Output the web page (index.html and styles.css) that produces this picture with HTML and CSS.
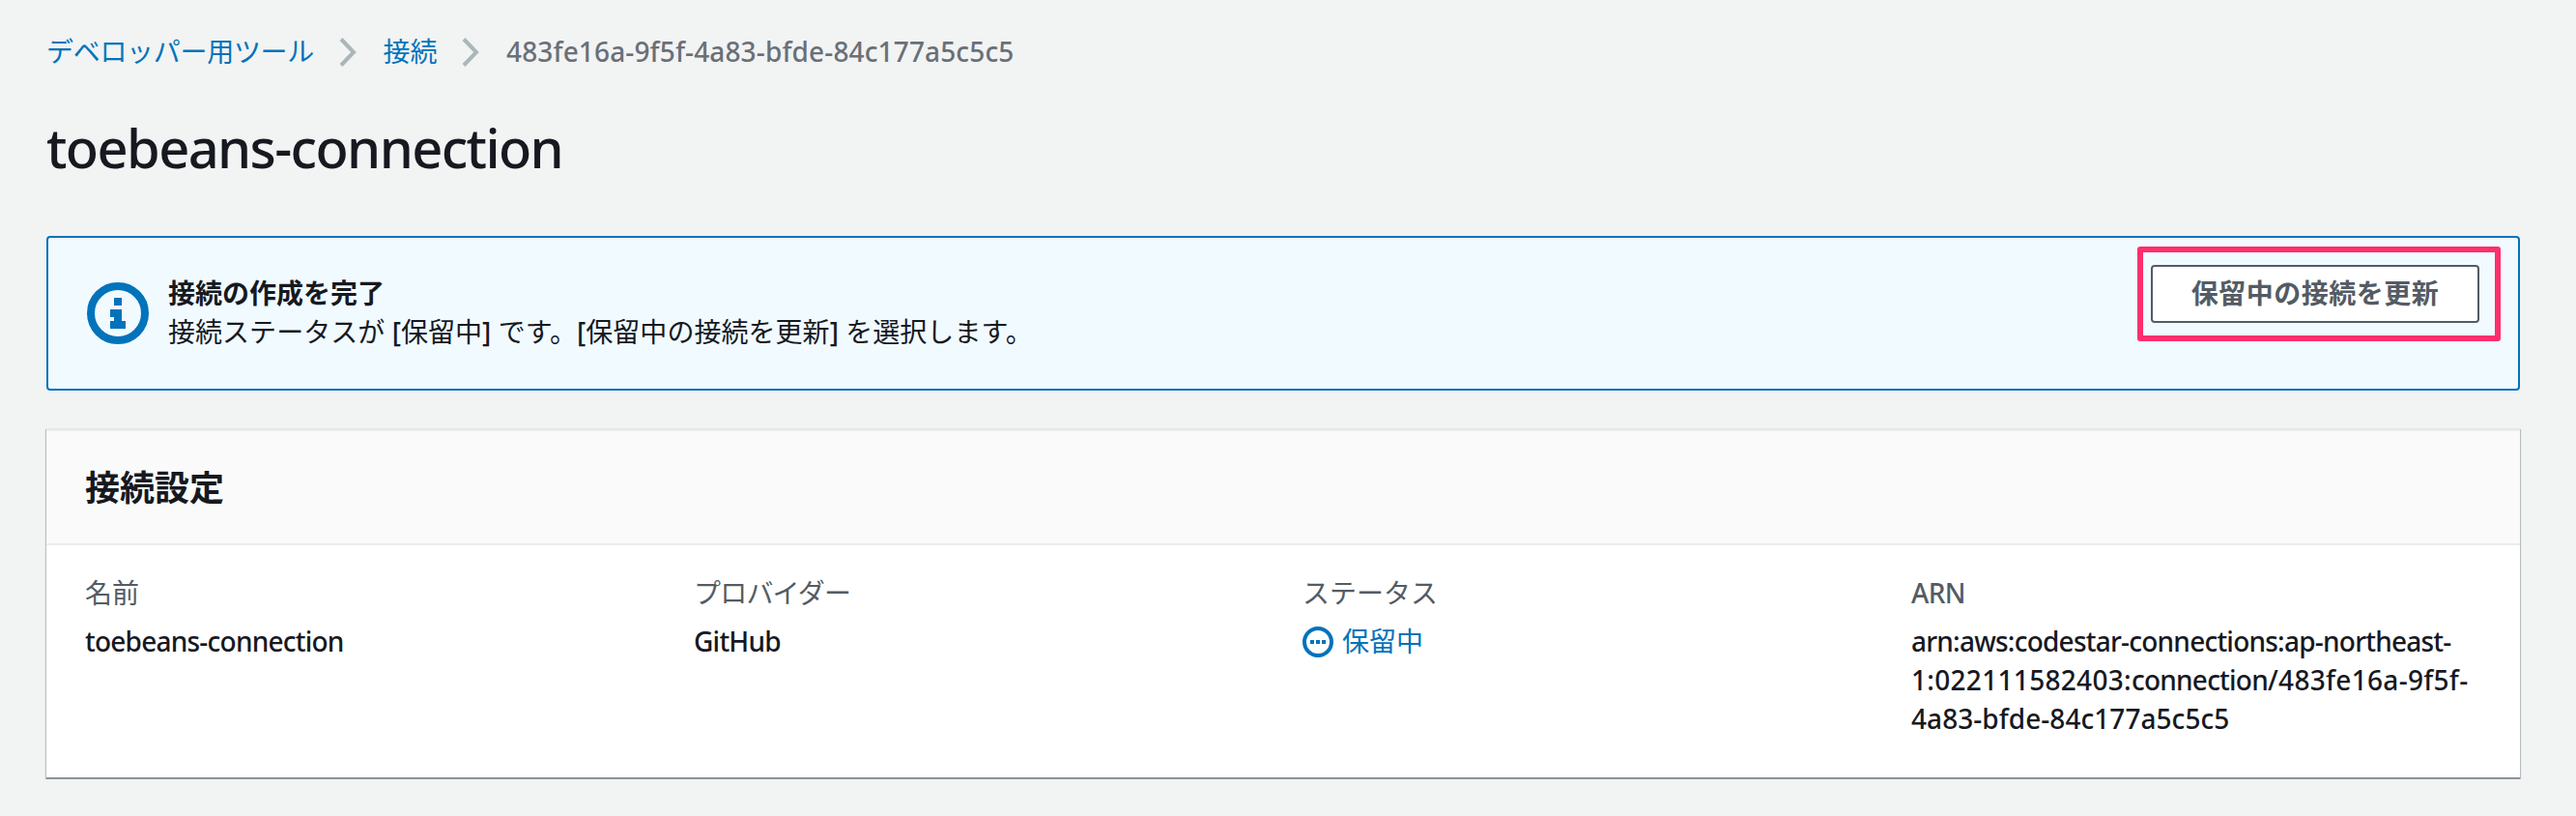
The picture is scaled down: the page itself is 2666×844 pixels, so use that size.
FILE: index.html
```html
<!DOCTYPE html>
<html lang="ja">
<head>
<meta charset="utf-8">
<title>toebeans-connection</title>
<link rel="stylesheet" href="styles.css">
</head>
<body>
<nav class="breadcrumbs">
  <a class="crumb crumb-link crumb-root">デベロッパー用ツール</a>
  <svg class="chevron" viewBox="0 0 18 30"><path d="M2 1.5 L15 15 L2 28.5"/></svg>
  <a class="crumb crumb-link">接続</a>
  <svg class="chevron" viewBox="0 0 18 30"><path d="M2 1.5 L15 15 L2 28.5"/></svg>
  <span class="crumb crumb-current">483fe16a-9f5f-4a83-bfde-84c177a5c5c5</span>
</nav>
<h1 class="page-title">toebeans-connection</h1>
<section class="flash">
  <svg class="flash-icon" viewBox="0 0 16 16"><circle cx="8" cy="8" r="7"/><path d="M7 4h2v2H7zM6 7h3v3h1v2H6v-2h1V9H6z"/></svg>
  <div class="flash-text">
    <div class="flash-title">接続の作成を完了</div>
    <div class="flash-message">接続ステータスが <span class="bracket">[</span>保留中<span class="bracket">]</span> です。<span class="bracket">[</span>保留中の接続を更新<span class="bracket">]</span> を選択します。</div>
  </div>
  <div class="highlight"><button class="button">保留中の接続を更新</button></div>
</section>
<section class="card">
  <header class="card-header"><h2 class="card-title">接続設定</h2></header>
  <div class="card-body">
    <div class="field"><div class="label">名前</div><div class="value">toebeans-connection</div></div>
    <div class="field"><div class="label label-kana">プロバイダー</div><div class="value">GitHub</div></div>
    <div class="field"><div class="label">ステータス</div><div class="value status"><svg class="status-icon" viewBox="0 0 16 16"><circle cx="8" cy="8" r="7"/><path d="M4 7h2v2H4zM7 7h2v2H7zM10 7h2v2h-2z"/></svg>保留中</div></div>
    <div class="field"><div class="label label-latin">ARN</div><div class="value">arn:aws:codestar-connections:ap-northeast-<br><span class="digits">1:022111582403:</span>connection<span class="digits">/483fe16a-9f5f-</span><br><span class="digits-tight">4a83-bfde-84c177a5c5c5</span></div></div>
  </div>
</section>
</body>
</html>
```
FILE: styles.css
```css
* { box-sizing: border-box; }
body {
  margin: 0;
  padding: 32px 58px 0 48px;
  background: #f2f3f3;
  color: #16191f;
  font-family: "Noto Sans", "Noto Sans CJK JP", sans-serif;
  font-size: 28px;
  line-height: 40px;
}
.breadcrumbs { display: flex; align-items: center; height: 44px; }
.crumb { padding-bottom: 2px; }
.crumb-link { color: #0073bb; }
.crumb-root { letter-spacing: -0.3px; }
.chevron { width: 18px; height: 30px; margin: 0 28px 0 25.5px; fill: none; stroke: #aab7b8; stroke-width: 4; }
.crumb-current { color: #687078; font-weight: 500; letter-spacing: 0.14px; }
.page-title { margin: 36px 0 0; font-size: 56px; line-height: 80px; font-weight: 500; letter-spacing: -1.6px; }
.flash {
  display: flex;
  height: 160px;
  margin-top: 52px;
  padding: 37px 18px 38px 40px;
  background: #f1faff;
  border: 2px solid #0073bb;
  border-radius: 4px;
}
.flash-icon, .status-icon { flex: none; fill: #0073bb; }
.flash-icon { width: 64px; height: 64px; margin-top: 9px; }
.flash-icon circle, .status-icon circle { fill: none; stroke: #0073bb; stroke-width: 2; }
.flash-text { flex: 1; padding-left: 20px; }
.flash-title { font-weight: 700; }
.flash-message { letter-spacing: 0.04px; }
.bracket { font-weight: 500; }
.highlight {
  align-self: flex-start;
  width: 376px;
  height: 98px;
  margin-top: -28px;
  padding: 13px 8px;
  border: 6px solid #ff2e6c;
  border-radius: 3px;
}
.button {
  display: block;
  width: 340px;
  height: 60px;
  padding: 0 0 2px;
  background: #fff;
  border: 2px solid #545b64;
  border-radius: 4px;
  color: #545b64;
  font: 700 28px/40px "Noto Sans", "Noto Sans CJK JP", sans-serif;
  letter-spacing: 0.5px;
}
.card {
  margin-top: 40px;
  height: 362px;
  background: #fff;
  border-top: 2px solid #eaeded;
  border-bottom: 2px solid #899498;
  box-shadow: 0 1px 1px 0 rgba(0,28,36,.3), 1px 0 1px 0 rgba(0,28,36,.2), -1px 0 1px 0 rgba(0,28,36,.2);
}
.card-header { height: 118px; padding: 37px 40px 0; background: #fafafa; border-bottom: 2px solid #eaeded; }
.card-title { margin: 0; font-size: 36px; line-height: 44px; font-weight: 700; }
.card-body { display: grid; grid-template-columns: 630px 630px 630px 590px; padding: 29px 0 0 40px; }
.label { color: #545b64; margin-bottom: 10px; }
.label-kana { letter-spacing: -0.8px; }
.label-latin { font-weight: 500; letter-spacing: -0.6px; }
.value { font-weight: 500; letter-spacing: -0.77px; }
.digits { letter-spacing: 0.3px; }
.digits-tight { letter-spacing: 0.05px; }
.status { display: flex; align-items: center; gap: 9px; color: #0073bb; font-weight: 400; letter-spacing: 0; }
.status-icon { width: 32px; height: 32px; margin-top: 2px; }
```
